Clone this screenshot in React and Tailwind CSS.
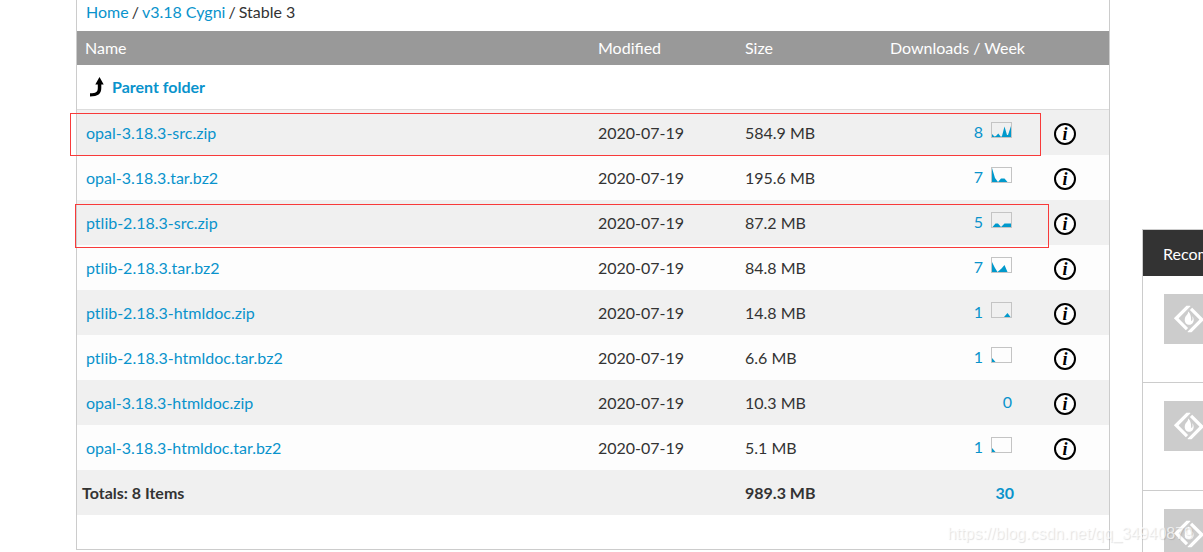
import React from 'react';
import { SiSourceforge } from 'react-icons/si';

// points are plotted on a 19x14 grid, one area chart per file
const files = [
  { name: 'opal-3.18.3-src.zip', modified: '2020-07-19', size: '584.9 MB', downloads: 8, chart: '0,14 0,11 2.5,13.5 4,13 6.3,10.5 9,14 10,13 12.5,3.5 15,12 16,12 19,3 19,14' },
  { name: 'opal-3.18.3.tar.bz2', modified: '2020-07-19', size: '195.6 MB', downloads: 7, chart: '0,14 0,0 3,10 6,14 9,10.5 12.5,10.5 15.5,14' },
  { name: 'ptlib-2.18.3-src.zip', modified: '2020-07-19', size: '87.2 MB', downloads: 5, chart: '0.5,14 3.5,10.5 6,10.5 9,14 12.5,10.5 19,10.5 19,14' },
  { name: 'ptlib-2.18.3.tar.bz2', modified: '2020-07-19', size: '84.8 MB', downloads: 7, chart: '0,14 0,4 3,10 5.5,14 9.5,10.5 12.5,7 15.5,14' },
  { name: 'ptlib-2.18.3-htmldoc.zip', modified: '2020-07-19', size: '14.8 MB', downloads: 1, chart: '12,14 15.5,10 18.5,14' },
  { name: 'ptlib-2.18.3-htmldoc.tar.bz2', modified: '2020-07-19', size: '6.6 MB', downloads: 1, chart: '0,14 0,10 3.5,14' },
  { name: 'opal-3.18.3-htmldoc.zip', modified: '2020-07-19', size: '10.3 MB', downloads: 0, chart: null },
  { name: 'opal-3.18.3-htmldoc.tar.bz2', modified: '2020-07-19', size: '5.1 MB', downloads: 1, chart: '0,14 0,10 3.5,14' },
];

const projects = [1, 2, 3];

function Sparkline({ points }) {
  return (
    <svg className="h-4 w-[21px] border border-[#c4c4c4]" viewBox="0 0 19 14" aria-hidden="true">
      <polygon points={points} fill="#0099cc" />
    </svg>
  );
}

function FileRow({ file }) {
  return (
    <tr className="h-[45px] odd:bg-[#f0f0f0] even:bg-[#fdfdfd]">
      <th scope="row" className="pl-[9px] text-left font-normal">
        <a href="#" className="text-[#0993cc]">{file.name}</a>
      </th>
      <td className="pl-2">{file.modified}</td>
      <td className="pl-2">{file.size}</td>
      <td className="pr-[21px] pb-1.5">
        <a href="#" className="flex items-center justify-end gap-2 text-[#0993cc]">
          <span className="pt-1">{file.downloads}</span>
          {file.chart && <Sparkline points={file.chart} />}
        </a>
      </td>
      <td className="pt-[3px] pl-[21px]">
        <button
          title="View details"
          className="flex size-[22px] items-center justify-center rounded-full border-2 border-black bg-white font-['Liberation_Serif',serif] text-lg leading-none font-bold text-black italic"
        >
          i
        </button>
      </td>
    </tr>
  );
}

function FileTable() {
  return (
    <table className="w-full table-fixed border-collapse">
      <colgroup>
        <col />
        <col className="w-[147px]" />
        <col className="w-[120px]" />
        <col className="w-[176px]" />
        <col className="w-[76px]" />
      </colgroup>
      <thead>
        <tr className="h-[34px] bg-[#999999] text-left text-white">
          <th className="pl-2 font-normal">Name</th>
          <th className="pl-2 font-normal">Modified</th>
          <th className="pl-2 font-normal">Size</th>
          <th className="pr-2 text-right font-normal">Downloads / Week</th>
          <th />
        </tr>
      </thead>
      <tbody>
        <tr className="h-[45px] shadow-[inset_0_-1px_0_#dddddd]">
          <th colSpan={5} className="pb-0.5 pl-3 text-left">
            <a href="#" className="flex items-center gap-2 font-bold text-[#0993cc]">
              <svg className="h-5 w-[15px]" viewBox="0 0 15 20" aria-hidden="true">
                <path d="M10.5 0 14.7 7.5H12.3V11C12.3 16.8 9 19.5 1 19.5V16.3C7 16.2 8.8 15 8.8 11V7.5H6.3Z" fill="#000000" />
              </svg>
              Parent folder
            </a>
          </th>
        </tr>
      </tbody>
      <tbody>
        {files.map((file) => (
          <FileRow key={file.name} file={file} />
        ))}
      </tbody>
      <tfoot>
        <tr className="h-[45px] bg-[#f0f0f0] text-left font-bold">
          <td colSpan={2} className="pl-[5px]">Totals: 8 Items</td>
          <td className="pl-2">989.3 MB</td>
          <td className="pr-[19px] text-right">
            <a href="#" className="text-[#0993cc]">30</a>
          </td>
          <td />
        </tr>
      </tfoot>
    </table>
  );
}

function Recommended() {
  return (
    <aside className="mt-[229px] w-[61px] shrink-0 overflow-hidden border-t border-l border-[#cccccc]">
      <h2 className="flex h-[46px] items-center bg-[#333333] pt-0.5 pl-5 whitespace-nowrap text-white">
        Recommended Projects
      </h2>
      <ul>
        {projects.map((id) => (
          <li key={id} className="h-[107px] border-b border-[#cccccc] pt-[18px] pl-[21px] even:h-[108px]">
            <a href="#" aria-label="Project" className="flex size-[50px] items-center justify-center bg-[#cccccc]">
              <SiSourceforge className="size-[30px] text-white" />
            </a>
          </li>
        ))}
      </ul>
    </aside>
  );
}

export default function App() {
  return (
    <div className="relative flex max-h-screen gap-8 overflow-hidden bg-white pl-19 font-[Lato,sans-serif] text-base text-[#333333]">
      <main className="flex-1 self-start border-x border-b border-[#cccccc] pb-[34px]">
        <nav className="flex h-[31px] items-start gap-[3px] pl-[9px]">
          <a href="#" className="text-[#0993cc]">Home</a>
          <span>/</span>
          <a href="#" className="text-[#0993cc]">v3.18 Cygni</a>
          <span>/</span>
          <span>Stable 3</span>
        </nav>
        <div className="relative">
          <FileTable />
          <div className="pointer-events-none absolute top-[82px] right-[68px] -left-[7px] h-[43px] border border-[#f83a3a]" />
          <div className="pointer-events-none absolute top-[173px] right-[60px] -left-0.5 h-11 border border-[#f83a3a]" />
        </div>
      </main>
      <Recommended />
      <span className="pointer-events-none absolute right-2.5 bottom-1.5 font-['Liberation_Sans',sans-serif] text-base text-white/70 [text-shadow:1px_1px_1px_rgba(0,0,0,0.12)]">
        https://blog.csdn.net/qq_34940879
      </span>
    </div>
  );
}
